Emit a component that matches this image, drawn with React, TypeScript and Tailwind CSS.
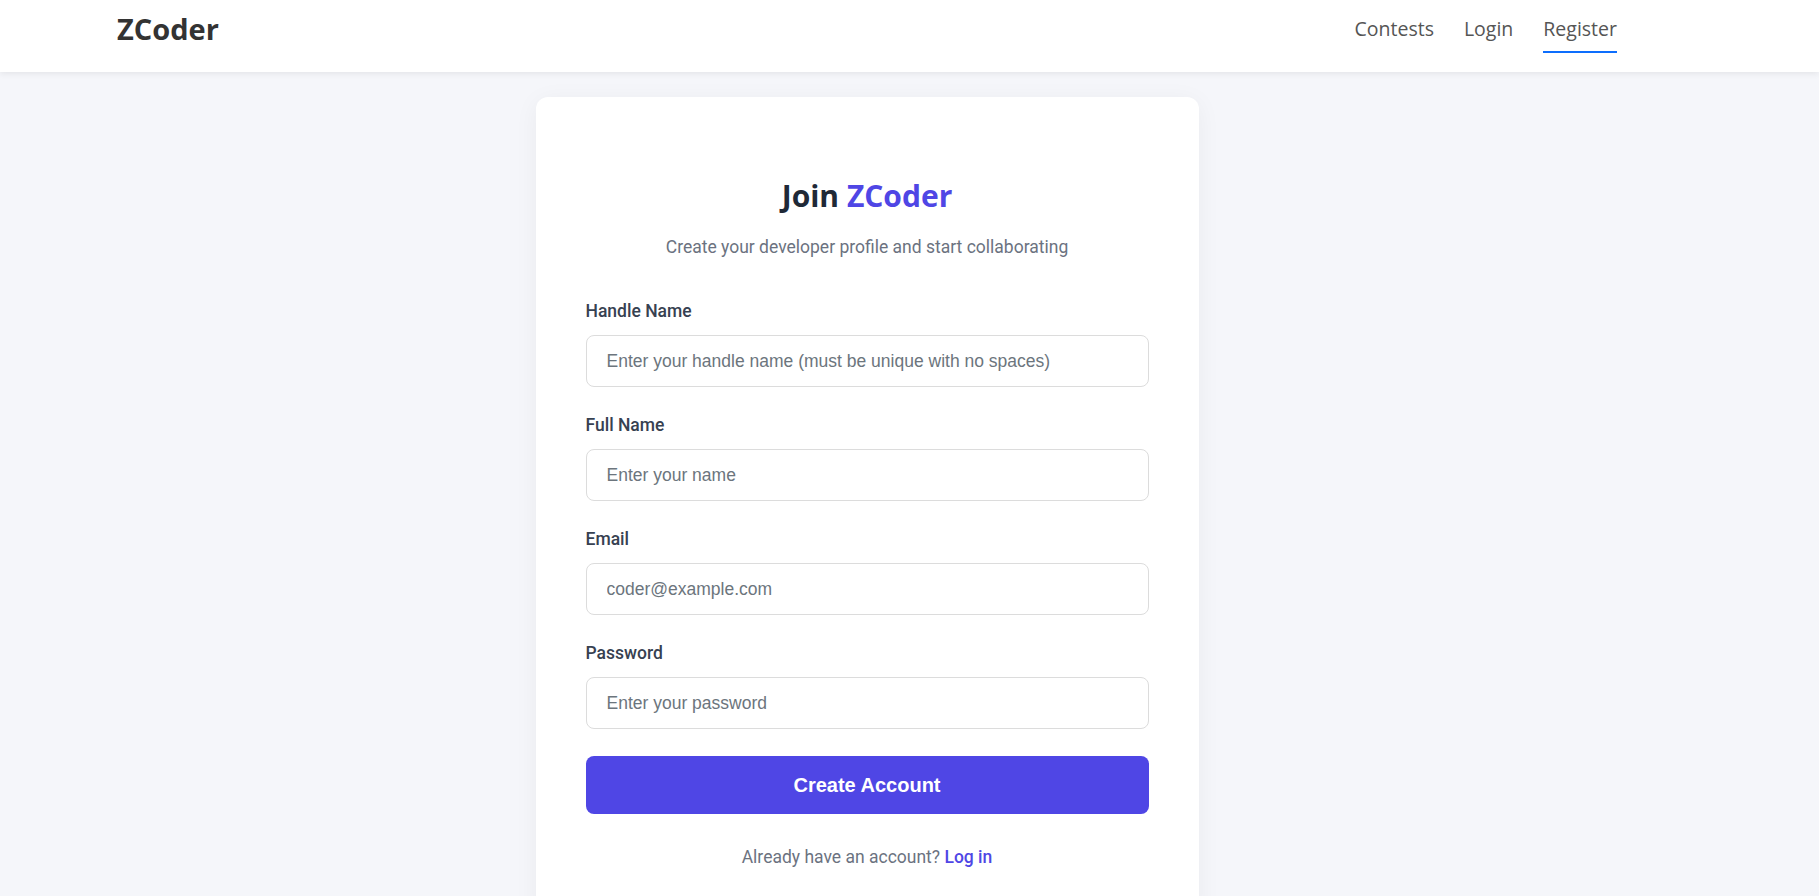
export default function App() {
  const fields = [
    { label: "Handle Name", type: "text", placeholder: "Enter your handle name (must be unique with no spaces)" },
    { label: "Full Name", type: "text", placeholder: "Enter your name" },
    { label: "Email", type: "email", placeholder: "coder@example.com" },
    { label: "Password", type: "password", placeholder: "Enter your password" },
  ]

  return (
    <div className="min-h-screen bg-[#f5f6fa] font-['Roboto',sans-serif]">
      <header className="h-[72px] bg-white shadow-[0_2px_6px_rgba(0,0,0,0.07)]">
        <div className="ml-[117px] flex w-[1500px] items-start justify-between">
          <a className="mt-[9px] font-['Open_Sans',sans-serif] text-[29px] font-bold leading-[40px] text-[#333333]">
            ZCoder
          </a>
          <nav className="mt-[15px] flex gap-[30px] font-['Open_Sans',sans-serif] text-[19.5px] leading-[28px] text-[#555555]">
            <a className="pb-[8px]">Contests</a>
            <a className="pb-[8px]">Login</a>
            <a className="border-b-2 border-[#0d6efd] pb-[8px]">Register</a>
          </nav>
        </div>
      </header>

      <main className="ml-[117px] flex w-[1500px] justify-center pt-[25px] pb-[40px]">
        <div className="w-[663px] rounded-xl bg-white px-[50px] pt-[79px] pb-[48px] shadow-[0_4px_24px_rgba(0,0,0,0.05)]">
          <h1 className="text-center font-['Open_Sans',sans-serif] text-[30px] font-bold leading-[40px] text-[#1f2937]">
            Join <span className="text-[#4f46e5]">ZCoder</span>
          </h1>
          <p className="mt-[19px] text-center text-[17.5px] leading-[24px] text-[#6b7280]">
            Create your developer profile and start collaborating
          </p>

          <form className="mt-[40px] flex flex-col gap-[26px]">
            {fields.map((f) => (
              <div key={f.label} className="flex flex-col gap-[12px]">
                <label className="text-[17.5px] font-medium leading-[24px] text-[#374151]">{f.label}</label>
                <input
                  type={f.type}
                  placeholder={f.placeholder}
                  className="h-[52px] w-full rounded-lg border border-[#dcdcdc] bg-white px-[20px] font-['Liberation_Sans',Arial,sans-serif] text-[17.5px] text-[#333] outline-none placeholder:text-[#6c757d]"
                />
              </div>
            ))}
            <button
              type="button"
              className="mt-[1px] h-[58px] w-full rounded-lg bg-[#4f46e5] font-['Liberation_Sans',Arial,sans-serif] text-[20px] font-bold text-white"
            >
              Create Account
            </button>
          </form>

          <p className="mt-[31px] text-center text-[17.5px] leading-[24px] text-[#6b7280]">
            Already have an account? <a className="font-medium text-[#4f46e5]">Log in</a>
          </p>
        </div>
      </main>
    </div>
  )
}
